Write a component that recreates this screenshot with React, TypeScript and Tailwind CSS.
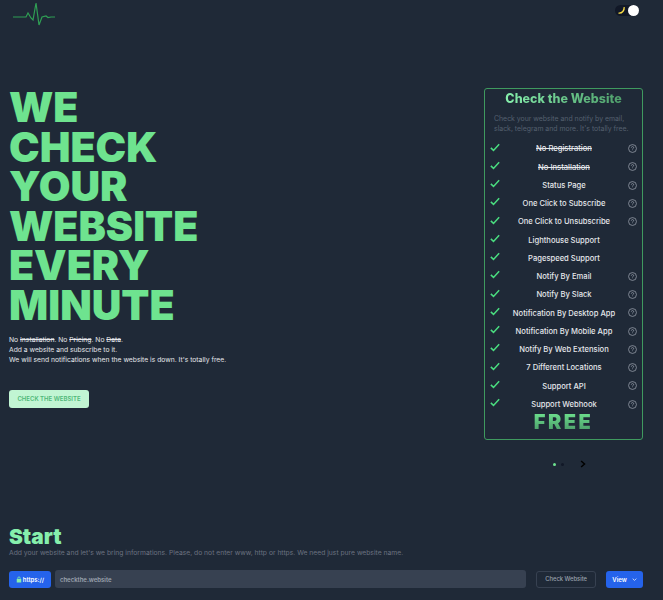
import React from "react";

const rows: [string, boolean, boolean][] = [
  ["No Registration", true, true],
  ["No Installation", true, true],
  ["Status Page", false, true],
  ["One Click to Subscribe", false, true],
  ["One Click to Unsubscribe", false, true],
  ["Lighthouse Support", false, false],
  ["Pagespeed Support", false, false],
  ["Notify By Email", false, true],
  ["Notify By Slack", false, true],
  ["Notification By Desktop App", false, true],
  ["Notification By Mobile App", false, true],
  ["Notify By Web Extension", false, true],
  ["7 Different Locations", false, true],
  ["Support API", false, true],
  ["Support Webhook", false, true],
];

function Check() {
  return (
    <svg viewBox="0 0 12 10" className="w-[10px] h-[9px] -mt-[4px] shrink-0 text-[#4ade80]" fill="none" stroke="currentColor" strokeWidth="1.8">
      <path d="M1 5.5 L4.2 8.5 L11 1" />
    </svg>
  );
}

function Help() {
  return (
    <svg viewBox="0 0 24 24" className="w-[9px] h-[9px] -mt-[1px] shrink-0 text-[#9ca3af]" fill="none" stroke="currentColor" strokeWidth="2">
      <circle cx="12" cy="12" r="10.5" />
      <path d="M9 9.5a3 3 0 1 1 4.5 2.6c-1 .6-1.5 1.2-1.5 2.4M12 17.5v.5" />
    </svg>
  );
}

export default function App() {
  return (
    <div className="w-[663px] h-[600px] overflow-hidden bg-[#1f2937] text-white flex flex-col" style={{ fontFamily: "Inter, 'Liberation Sans', sans-serif" }}>
      <header className="h-[30px] flex justify-between pl-[13px] pr-[24px] pt-[2px]">
        <svg viewBox="0 0 42 24" className="w-[42px] h-[24px] text-[#2f9e54]" fill="none" stroke="currentColor" strokeWidth="1.2">
          <path d="M0 15 H13 L15 11 L18 16 L20 18 L23 1 L26 23 L29 15 L33 14 L35 15.5 L38 15 H42" />
        </svg>
        <div className="w-[24px] h-[11px] mt-[3px] rounded-full bg-[#111827] relative">
          <svg viewBox="0 0 12 12" className="absolute left-[2px] top-[1px] w-[9px] h-[9px]" fill="none" stroke="#fde047" strokeWidth="1.8">
            <path d="M9.5 1.5 C10 6 7 10 2 9.5" />
          </svg>
          <div className="absolute right-0 top-0 w-[11px] h-[11px] rounded-full bg-white" />
        </div>
      </header>

      <main className="flex justify-between pl-[9px] pr-[20px] pt-[58px]">
        <div>
          <h1 className="text-[41px] leading-[39.6px] font-black text-[#6ee38f]">
            WE<br />CHECK<br />YOUR<br />WEBSITE<br />EVERY<br />MINUTE
          </h1>
          <div className="mt-[9px] text-[6.75px] leading-[10px] text-[#e5e7eb]">
            <p>No <s>Installation</s>. No <s>Pricing</s>. No <s>Data</s>.</p>
            <p>Add a website and subscribe to it.</p>
            <p>We will send notifications when the website is down. It's totally free.</p>
          </div>
          <button className="mt-[25px] w-[80px] h-[18px] rounded-[3px] bg-[#c1f5d3] text-[#4fb878] text-[6px] font-semibold flex items-center justify-center">
            CHECK THE WEBSITE
          </button>
        </div>

        <div className="flex flex-col items-center">
          <section className="w-[159px] h-[352px] border border-[#3f9a5f] rounded-[3px] flex flex-col items-center">
            <h2 className="text-[12.5px] leading-[16px] mt-[2px] font-extrabold bg-gradient-to-r from-[#86efac] to-[#4f9f6b] bg-clip-text text-transparent">Check the Website</h2>
            <p className="mt-[7px] pl-[9px] text-[6.9px] leading-[10px] text-[#55606f] w-full">
              Check your website and notify by email,<br />slack, telegram and more. It's totally free.
            </p>
            <ul className="w-full mt-[6px] px-[5px]">
              {rows.map(([label, struck, help]) => (
                <li key={label} className="h-[18.25px] flex items-center">
                  <Check />
                  <span className={`flex-1 text-center text-[7.6px] font-medium text-[#e5e7eb] ${struck ? "line-through" : ""}`}>{label}</span>
                  {help ? <Help /> : <span className="w-[9px]" />}
                </li>
              ))}
            </ul>
            <div className="-mt-[2px] text-[20px] leading-[20px] font-black tracking-[2.5px] bg-gradient-to-b from-[#6ee38f] to-[#4a9a68] bg-clip-text text-transparent">FREE</div>
          </section>
          <div className="mt-[20px] flex items-center pl-[12px] w-[100px] justify-center">
            <span className="w-[3px] h-[3px] rounded-full bg-[#6ee38f]" />
            <span className="w-[3px] h-[3px] ml-[5px] rounded-full bg-[#111827]" />
            <svg viewBox="0 0 8 10" className="w-[6px] h-[8px] ml-[16px]" fill="none" stroke="#000000" strokeWidth="2">
              <path d="M1.5 1 L6 5 L1.5 9" />
            </svg>
          </div>
        </div>
      </main>

      <section className="mt-auto pl-[9px] pr-[20px] pb-[12px]">
        <h3 className="text-[20.8px] leading-[20px] font-black text-[#86efac]">Start</h3>
        <p className="mt-[1px] text-[6.75px] leading-[10px] text-[#6b7280]">
          Add your website and let's we bring informations. Please, do not enter www, http or https. We need just pure website name.
        </p>
        <div className="mt-[12px] flex items-center">
          <div className="w-[42px] h-[17px] rounded-[3px] bg-[#2563eb] flex items-center justify-center gap-[1px] text-[6px] font-semibold">
            <svg viewBox="0 0 12 14" className="w-[6px] h-[7px]" fill="#86efac">
              <path d="M3 6V4a3 3 0 0 1 6 0v2h1.5v7h-9V6ZM4.5 6h3V4a1.5 1.5 0 0 0-3 0Z" />
            </svg>
            https://
          </div>
          <div className="ml-[4px] w-[472px] h-[18px] rounded-[3px] bg-[#374151] flex items-center pl-[5px] text-[6px] font-semibold text-[#9ca3af]">
            checkthe.website
          </div>
          <button className="ml-[10px] w-[60px] h-[17px] rounded-[3px] border border-[#374151] text-[5.8px] font-medium text-[#9ca3af]">Check Website</button>
          <button className="ml-[10px] w-[37px] h-[17px] rounded-[3px] bg-[#2563eb] text-[6px] font-semibold flex items-center justify-center gap-[5px]">
            View
            <svg viewBox="0 0 8 5" className="w-[5px] h-[3px]" fill="none" stroke="white" strokeWidth="1.2"><path d="M1 1l3 3 3-3" /></svg>
          </button>
        </div>
      </section>
    </div>
  );
}
